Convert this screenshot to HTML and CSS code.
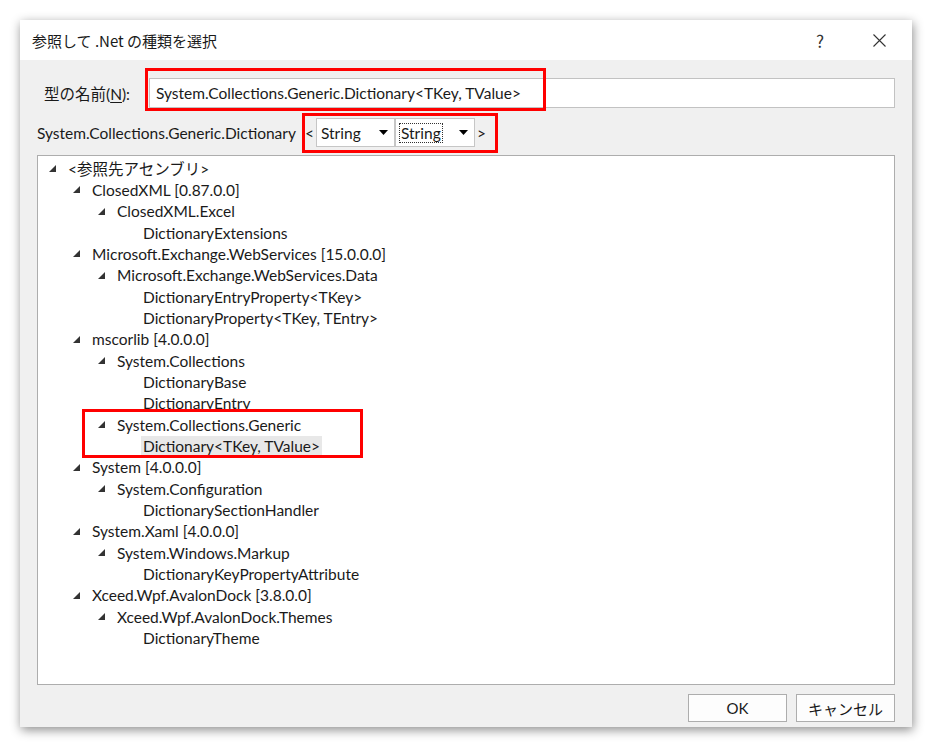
FILE: index.html
```html
<!DOCTYPE html>
<html lang="ja">
<head>
    <meta charset="UTF-8">
    <meta name="viewport" content="width=device-width, initial-scale=1.0">
    <link rel="stylesheet" href="styles.css">
    <title>参照して .Net の種類を選択</title>
</head>
<body>
    <div class="dialog">
        <div class="titlebar">
            <span class="title">参照して .Net の種類を選択</span>
            <span class="help">?</span>
            <span class="close">
                <svg width="13" height="13" viewBox="0 0 13 13"><path d="M0.5 0.5 L12.5 12.5 M12.5 0.5 L0.5 12.5" stroke="#333" stroke-width="1.1" fill="none"/></svg>
            </span>
        </div>

        <div class="dialog-body">
            <div class="name-row">
                <label class="name-label">型の名前(<u>N</u>):</label>
                <div class="textbox">System.Collections.Generic.Dictionary&lt;TKey, TValue&gt;</div>
            </div>

            <div class="generic-row">
                <span class="generic-name">System.Collections.Generic.Dictionary</span>
                <span class="bracket lt">&lt;</span>
                <div class="combo">
                    <span class="combo-text">String</span>
                    <svg class="combo-arrow" width="9" height="5" viewBox="0 0 9 5"><path d="M0 0 L9 0 L4.5 5 Z" fill="#000"/></svg>
                </div>
                <div class="combo combo-focus">
                    <span class="combo-text"><span class="focus-ring">String</span></span>
                    <svg class="combo-arrow" width="9" height="5" viewBox="0 0 9 5"><path d="M0 0 L9 0 L4.5 5 Z" fill="#000"/></svg>
                </div>
                <span class="bracket gt">&gt;</span>
            </div>

            <div class="tree">
                <div class="node lv0"><span class="toggle"></span><span class="text">&lt;参照先アセンブリ&gt;</span></div>
                <div class="node lv1"><span class="toggle"></span><span class="text">ClosedXML [0.87.0.0]</span></div>
                <div class="node lv2"><span class="toggle"></span><span class="text">ClosedXML.Excel</span></div>
                <div class="node lv3"><span class="text">DictionaryExtensions</span></div>
                <div class="node lv1"><span class="toggle"></span><span class="text">Microsoft.Exchange.WebServices [15.0.0.0]</span></div>
                <div class="node lv2"><span class="toggle"></span><span class="text">Microsoft.Exchange.WebServices.Data</span></div>
                <div class="node lv3"><span class="text">DictionaryEntryProperty&lt;TKey&gt;</span></div>
                <div class="node lv3"><span class="text">DictionaryProperty&lt;TKey, TEntry&gt;</span></div>
                <div class="node lv1"><span class="toggle"></span><span class="text">mscorlib [4.0.0.0]</span></div>
                <div class="node lv2"><span class="toggle"></span><span class="text">System.Collections</span></div>
                <div class="node lv3"><span class="text">DictionaryBase</span></div>
                <div class="node lv3"><span class="text">DictionaryEntry</span></div>
                <div class="node lv2"><span class="toggle"></span><span class="text">System.Collections.Generic</span></div>
                <div class="node lv3"><span class="text selected">Dictionary&lt;TKey, TValue&gt;</span></div>
                <div class="node lv1"><span class="toggle"></span><span class="text">System [4.0.0.0]</span></div>
                <div class="node lv2"><span class="toggle"></span><span class="text">System.Configuration</span></div>
                <div class="node lv3"><span class="text">DictionarySectionHandler</span></div>
                <div class="node lv1"><span class="toggle"></span><span class="text">System.Xaml [4.0.0.0]</span></div>
                <div class="node lv2"><span class="toggle"></span><span class="text">System.Windows.Markup</span></div>
                <div class="node lv3"><span class="text">DictionaryKeyPropertyAttribute</span></div>
                <div class="node lv1"><span class="toggle"></span><span class="text">Xceed.Wpf.AvalonDock [3.8.0.0]</span></div>
                <div class="node lv2"><span class="toggle"></span><span class="text">Xceed.Wpf.AvalonDock.Themes</span></div>
                <div class="node lv3"><span class="text">DictionaryTheme</span></div>
            </div>

            <div class="buttons">
                <button class="btn">OK</button>
                <button class="btn">キャンセル</button>
            </div>
        </div>

        <!-- red annotation frames -->
        <div class="mark mark-name"></div>
        <div class="mark mark-args"></div>
        <div class="mark mark-node"></div>
    </div>
</body>
</html>
```

FILE: styles.css
```css
body {
    margin: 0;
    padding: 0;
    background-color: #fff;
    font-family: Lato, "Noto Sans CJK JP", sans-serif;
    font-size: 15.5px;
    color: #1a1a1a;
}

.dialog {
    position: relative;
    margin: 20px;
    width: 892px;
    height: 707px;
    background-color: #f0f0f0;
    box-shadow: 1px 3px 10px rgba(0, 0, 0, 0.45);
}

.titlebar {
    height: 40px;
    background-color: #fff;
    display: flex;
    align-items: center;
    padding-left: 12px;
}

.title {
    flex: 1;
    font-family: "Noto Sans CJK JP", sans-serif;
    font-size: 15px;
    color: #1a1a1a;
}

.help {
    width: 20px;
    margin-right: 43px;
    text-align: center;
    font-family: "Noto Sans CJK JP", sans-serif;
    font-size: 17px;
    color: #333;
}

.close {
    width: 13px;
    height: 13px;
    margin-right: 26px;
    display: flex;
}

.dialog-body {
    padding: 0 17px;
}

.name-row {
    display: flex;
    align-items: center;
    margin-top: 18px;
    height: 30px;
    padding-left: 7px;
}

.name-label {
    width: 105px;
    font-family: Lato, "Noto Sans CJK JP", sans-serif;
}

.name-label u {
    text-underline-offset: 2px;
}

.textbox {
    flex: 1;
    height: 30px;
    box-sizing: border-box;
    border: 1px solid #c2c2c2;
    background-color: #fff;
    padding-left: 6px;
    line-height: 28px;
}

.generic-row {
    display: flex;
    align-items: center;
    margin-top: 10px;
    height: 29px;
}

.generic-name {
    width: 266px;
    white-space: nowrap;
}

.bracket {
    width: 13px;
    text-align: center;
}

.combo {
    width: 79px;
    height: 29px;
    box-sizing: border-box;
    border: 1px solid #c6c6c6;
    background-color: #fff;
    display: flex;
    align-items: center;
    padding: 0 6px 0 4px;
}

.combo-focus {
    width: 80px;
}

.combo-text {
    flex: 1;
}

.focus-ring {
    outline: 1px dotted #333;
    outline-offset: 0;
    padding: 0 1px;
}

.combo-arrow {
    display: block;
}

.tree {
    margin-top: 8px;
    height: 530px;
    box-sizing: border-box;
    border: 1px solid #adadad;
    background-color: #fff;
    padding-top: 2px;
}

.node {
    display: flex;
    align-items: center;
    height: 21.33px;
    white-space: nowrap;
}

.lv0 { padding-left: 3px; }
.lv1 { padding-left: 27px; }
.lv2 { padding-left: 52px; }
.lv3 { padding-left: 103px; }

.toggle {
    width: 25px;
    height: 21px;
    display: flex;
    align-items: center;
}

.toggle::before {
    content: "";
    display: block;
    margin-left: 8px;
    width: 0;
    height: 0;
    border-left: 7px solid transparent;
    border-bottom: 7px solid #333;
}

.text {
    padding: 0 2px;
    line-height: 20px;
}

.selected {
    background-color: #e8e8e8;
}

.buttons {
    display: flex;
    justify-content: flex-end;
    gap: 9px;
    margin-top: 9px;
}

.btn {
    width: 99px;
    height: 28px;
    box-sizing: border-box;
    border: 1px solid #adadad;
    background-color: #fdfdfd;
    font-family: Lato, "Noto Sans CJK JP", sans-serif;
    font-size: 15px;
    color: #1a1a1a;
    padding: 0;
}

.mark {
    position: absolute;
    box-sizing: border-box;
    border: 3px solid #ff0000;
}

.mark-name {
    left: 125px;
    top: 48px;
    width: 401px;
    height: 43px;
}

.mark-args {
    left: 282px;
    top: 93px;
    width: 196px;
    height: 40px;
}

.mark-node {
    left: 62px;
    top: 389px;
    width: 281px;
    height: 49px;
}
```
